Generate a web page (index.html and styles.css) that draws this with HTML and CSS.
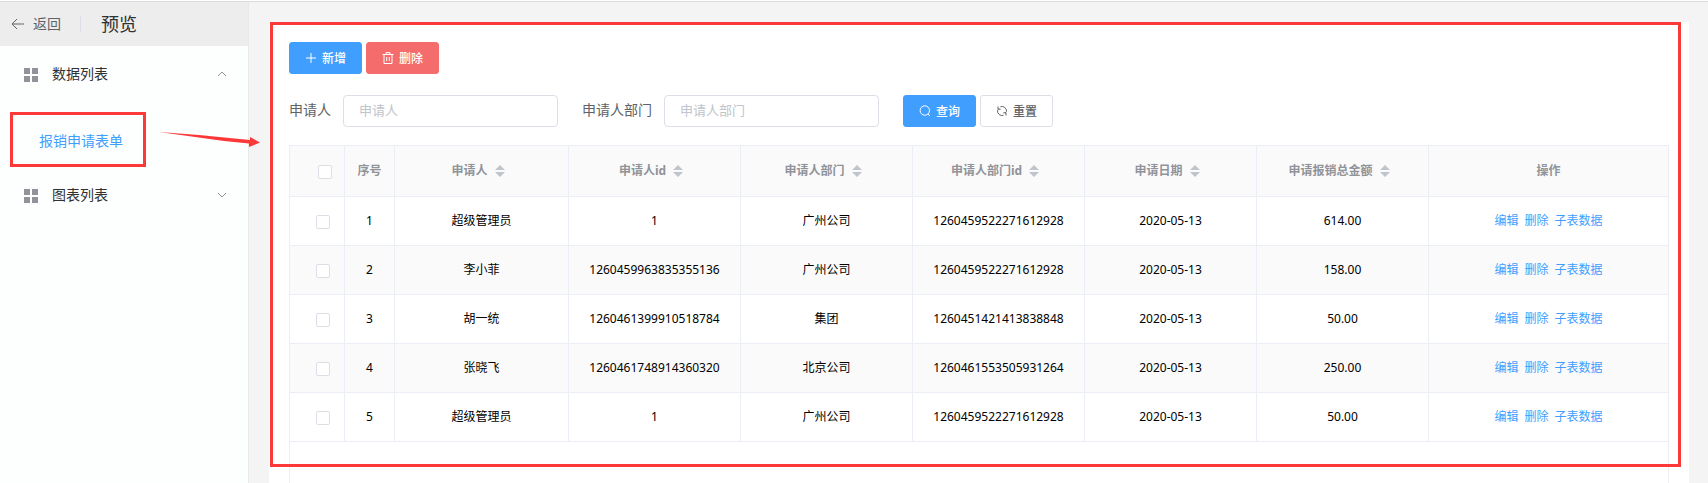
FILE: index.html
```html
<!DOCTYPE html>
<html lang="zh-CN">
<head>
	<meta charset="UTF-8">
	<title>预览</title>
	<link rel="stylesheet" href="styles.css">
</head>
<body>
	<!-- icon shapes shared by the page -->
	<svg class="symbols" aria-hidden="true">
		<symbol id="grid" viewBox="0 0 14 14"><path fill="currentColor" d="M0 0h6v6H0zM8 0h6v6H8zM0 8h6v6H0zM8 8h6v6H8z"/></symbol>
		<symbol id="sort" viewBox="0 0 10 12"><path fill="currentColor" d="M0 5l5-5 5 5zM0 7h10l-5 5z"/></symbol>
	</svg>
	<div class="page">
		<div class="sidebar">
			<div class="header">
				<a href="#" class="back">
					<svg width="14" height="12" viewBox="0 0 14 12"><path d="M6 1L1 6l5 5M1 6h12"/></svg>
					返回
				</a>
				<h1>预览</h1>
			</div>
			<ul class="menu">
				<li>
					<button type="button" class="menu-title">
						<svg class="grid" width="14" height="14"><use href="#grid"/></svg>
						<span>数据列表</span>
						<svg class="arrow" width="10" height="6" viewBox="0 0 10 6"><path d="M1 5l4-4 4 4"/></svg>
					</button>
					<a href="#" class="menu-item">报销申请表单</a>
				</li>
				<li>
					<button type="button" class="menu-title">
						<svg class="grid" width="14" height="14"><use href="#grid"/></svg>
						<span>图表列表</span>
						<svg class="arrow" width="10" height="6" viewBox="0 0 10 6"><path d="M1 1l4 4 4-4"/></svg>
					</button>
				</li>
			</ul>
			<svg class="pointer" width="102" height="22" viewBox="0 0 102 22"><path d="M1 5l40 3 51 5v-3l10 5.500L91 20v-3.500L66 14 30 9z"/></svg>
		</div>
		<div class="main">
			<div class="card">
				<div class="toolbar">
					<button type="button" class="btn primary">
						<svg width="12" height="12" viewBox="0 0 12 12"><path d="M6 1v10M1 6h10"/></svg>新增
					</button>
					<button type="button" class="btn danger">
						<svg width="12" height="12" viewBox="0 0 12 12"><path d="M.5 2.500h11M4 2.500V.7h4v1.800M2 2.500v9h8v-9M4.700 5v4M7.300 5v4"/></svg>删除
					</button>
				</div>
				<form class="search">
					<label for="user">申请人</label>
					<input type="text" id="user" placeholder="申请人">
					<label for="dept">申请人部门</label>
					<input type="text" id="dept" placeholder="申请人部门">
					<button type="button" class="btn primary">
						<svg width="12" height="12" viewBox="0 0 12 12"><circle cx="5.800" cy="5.500" r="4.700"/><path d="M9 9l2 2"/></svg>查询
					</button>
					<button type="reset" class="btn">
						<svg width="12" height="12" viewBox="0 0 12 12"><path d="M4.500 1.700A4.600 4.600 0 0 1 10.500 6.500M7.500 10.300A4.600 4.600 0 0 1 1.500 5.500M2 1.500v2.700h2.700M10 10.500V7.800H7.300M1.600 5.500l1.200-1.600M10.400 6.500L9.200 8.100"/></svg>重置
					</button>
				</form>
				<div class="table-box">
					<table>
						<colgroup>
							<col class="col-check"><col class="col-index"><col class="col-name">
							<col class="col-data"><col class="col-data"><col class="col-data"><col class="col-data"><col class="col-data">
							<col>
						</colgroup>
						<thead>
							<tr>
								<th class="check"><input type="checkbox" aria-label="全选"></th>
								<th>序号</th>
								<th><button type="button" class="sort">申请人<svg width="10" height="12"><use href="#sort"/></svg></button></th>
								<th><button type="button" class="sort">申请人id<svg width="10" height="12"><use href="#sort"/></svg></button></th>
								<th><button type="button" class="sort">申请人部门<svg width="10" height="12"><use href="#sort"/></svg></button></th>
								<th><button type="button" class="sort">申请人部门id<svg width="10" height="12"><use href="#sort"/></svg></button></th>
								<th><button type="button" class="sort">申请日期<svg width="10" height="12"><use href="#sort"/></svg></button></th>
								<th><button type="button" class="sort">申请报销总金额<svg width="10" height="12"><use href="#sort"/></svg></button></th>
								<th>操作</th>
							</tr>
						</thead>
						<tbody>
							<tr>
								<td class="check"><input type="checkbox" aria-label="选择 1"></td>
								<td>1</td>
								<td>超级管理员</td>
								<td>1</td>
								<td>广州公司</td>
								<td>1260459522271612928</td>
								<td>2020-05-13</td>
								<td>614.00</td>
								<td><div class="links"><a href="#">编辑</a><a href="#">删除</a><a href="#">子表数据</a></div></td>
							</tr>
							<tr>
								<td class="check"><input type="checkbox" aria-label="选择 2"></td>
								<td>2</td>
								<td>李小菲</td>
								<td>1260459963835355136</td>
								<td>广州公司</td>
								<td>1260459522271612928</td>
								<td>2020-05-13</td>
								<td>158.00</td>
								<td><div class="links"><a href="#">编辑</a><a href="#">删除</a><a href="#">子表数据</a></div></td>
							</tr>
							<tr>
								<td class="check"><input type="checkbox" aria-label="选择 3"></td>
								<td>3</td>
								<td>胡一统</td>
								<td>1260461399910518784</td>
								<td>集团</td>
								<td>1260451421413838848</td>
								<td>2020-05-13</td>
								<td>50.00</td>
								<td><div class="links"><a href="#">编辑</a><a href="#">删除</a><a href="#">子表数据</a></div></td>
							</tr>
							<tr>
								<td class="check"><input type="checkbox" aria-label="选择 4"></td>
								<td>4</td>
								<td>张晓飞</td>
								<td>1260461748914360320</td>
								<td>北京公司</td>
								<td>1260461553505931264</td>
								<td>2020-05-13</td>
								<td>250.00</td>
								<td><div class="links"><a href="#">编辑</a><a href="#">删除</a><a href="#">子表数据</a></div></td>
							</tr>
							<tr>
								<td class="check"><input type="checkbox" aria-label="选择 5"></td>
								<td>5</td>
								<td>超级管理员</td>
								<td>1</td>
								<td>广州公司</td>
								<td>1260459522271612928</td>
								<td>2020-05-13</td>
								<td>50.00</td>
								<td><div class="links"><a href="#">编辑</a><a href="#">删除</a><a href="#">子表数据</a></div></td>
							</tr>
						</tbody>
					</table>
				</div>
			</div>
		</div>
	</div>
</body>
</html>
```
FILE: styles.css
```css
*{
	box-sizing: border-box;
	margin: 0;
	padding: 0;
}
body{
	font-family: "Noto Sans", "Noto Sans CJK SC", sans-serif;
	font-size: 14px;
	line-height: 20px;
	color: #303133;
	background-color: #fff;
}
button, input{
	font-family: inherit;
}
a{
	text-decoration: none;
}
svg{
	fill: none;
	stroke: currentColor;
	flex: none;
}
.symbols{
	display: none;
}
.page{
	display: flex;
	min-height: calc(100vh - 1px);
	margin-top: 1px;
	border-top: 1px solid #d9dcdb;
	background-color: #f4f4f4;
}

/* sidebar */
.sidebar{
	position: relative;
	flex: none;
	width: 249px;
	background-color: #fdfefe;
	border-right: 1px solid #e9e9e9;
}
.header{
	display: flex;
	align-items: center;
	height: 44px;
	padding: 0 11px;
	background-color: #ededed;
}
.back{
	display: flex;
	align-items: center;
	gap: 8px;
	height: 16px;
	padding-right: 19px;
	margin-right: 20px;
	border-right: 1px solid #dcdfe6;
	color: #606266;
}
.header h1{
	font-size: 18px;
	font-weight: 400;
	line-height: 24px;
}
.menu{
	list-style: none;
}
.menu-title{
	display: flex;
	align-items: center;
	width: 100%;
	height: 55px;
	padding: 0 21px 0 24px;
	border: 0;
	background: none;
	font-size: 14px;
	line-height: 20px;
	color: #303133;
	cursor: pointer;
}
.menu-title .grid{
	margin: 2px 14px 0 0;
	color: #909399;
	stroke: none;
}
.menu-title .arrow{
	margin-left: auto;
	color: #909399;
}
.menu-item{
	display: flex;
	align-items: center;
	width: 136px;
	height: 55px;
	margin: 11px 0 0 10px;
	padding: 2px 0 0 26px;
	border: 3px solid #fd3838;
	color: #409eff;
}
.pointer{
	position: absolute;
	left: 158px;
	top: 125px;
	z-index: 2;
	fill: #fd3838;
	stroke: none;
}

/* content */
.main{
	display: flex;
	flex: 1;
	min-width: 0;
	padding: 20px 19px 0 20px;
}
.card{
	position: relative;
	display: flex;
	flex-direction: column;
	flex: 1;
	min-width: 0;
	padding: 20px 20px 0;
	background-color: #fff;
}
.card::after{
	content: "";
	position: absolute;
	top: 0;
	right: 8px;
	bottom: 16px;
	left: 1px;
	border: 3px solid #fd3838;
	pointer-events: none;
}
.toolbar{
	display: flex;
	gap: 4px;
}
.btn{
	display: flex;
	align-items: center;
	justify-content: center;
	gap: 5px;
	width: 73px;
	height: 32px;
	padding-bottom: 1px;
	border: 1px solid #dcdfe6;
	border-radius: 3px;
	background-color: #fff;
	color: #606266;
	font-size: 12px;
	font-weight: 500;
	cursor: pointer;
}
.btn.primary{
	background-color: #409eff;
	border-color: #409eff;
	color: #fff;
}
.btn.danger{
	background-color: #f56c6c;
	border-color: #f56c6c;
	color: #fff;
}
.search{
	display: flex;
	align-items: center;
	margin: 21px 0 18px;
}
.search label{
	margin-right: 12px;
	padding-bottom: 2px;
	color: #606266;
}
.search input{
	width: 215px;
	height: 32px;
	margin-right: 24px;
	padding: 0 15px 2px;
	border: 1px solid #dcdfe6;
	border-radius: 4px;
	font-size: 13px;
	outline: none;
}
.search input::placeholder{
	color: #c0c4cc;
}
.search .btn + .btn{
	margin-left: 4px;
}

/* table */
.table-box{
	flex: 1;
	border: 1px solid #ebeef5;
	border-bottom: 0;
}
table{
	width: 100%;
	table-layout: fixed;
	border-collapse: separate;
	border-spacing: 0;
	font-size: 12px;
	color: #000;
}
.col-check{
	width: 55px;
}
.col-index{
	width: 50px;
}
.col-name{
	width: 174px;
}
.col-data{
	width: 172px;
}
th, td{
	height: 49px;
	border-right: 1px solid #ebeef5;
	border-bottom: 1px solid #ebeef5;
	text-align: center;
	vertical-align: middle;
}
th:last-child, td:last-child{
	border-right: 0;
}
th{
	height: 51px;
	background-color: #fafafa;
	color: #909399;
	font-weight: 700;
}
tbody tr:nth-child(even){
	background-color: #fafafa;
}
th.check{
	padding-left: 16px;
}
td.check{
	padding-left: 12px;
}
.check input{
	display: block;
	appearance: none;
	width: 14px;
	height: 14px;
	margin: 2px auto 0;
	border: 1px solid #dcdfe6;
	border-radius: 2px;
	background-color: #fff;
}
.sort{
	display: flex;
	align-items: center;
	justify-content: center;
	gap: 7px;
	width: 100%;
	padding-right: 7px;
	border: 0;
	background: none;
	color: inherit;
	font-size: 12px;
	font-weight: 700;
	line-height: 20px;
	cursor: pointer;
}
.sort svg{
	color: #c0c4cc;
	stroke: none;
}
.links{
	display: flex;
	justify-content: center;
	gap: 6px;
}
.links a{
	color: #409eff;
}
```
